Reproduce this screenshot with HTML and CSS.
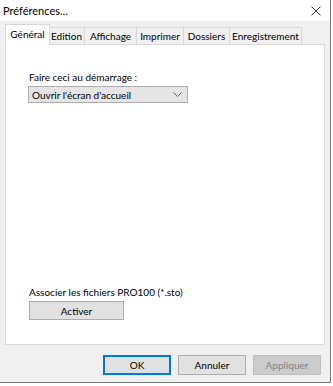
FILE: index.html
```html
<!DOCTYPE html>
<html lang="fr">
<head>
    <meta charset="UTF-8">
    <meta name="viewport" content="width=device-width, initial-scale=1.0">
    <title>Préférences...</title>
    <link rel="stylesheet" href="styles.css">
</head>
<body>
    <div class="window">
        <!-- barre de titre -->
        <div class="titlebar">
            <span class="title">Préférences...</span>
            <svg class="close" width="10" height="10" viewBox="0 0 10 10">
                <path d="M0.5 0.5 L9.5 9.5 M9.5 0.5 L0.5 9.5" stroke="#333" stroke-width="1" fill="none"/>
            </svg>
        </div>

        <div class="content">
            <!-- onglets -->
            <div class="tabs">
                <div class="tab active w-general">Général</div>
                <div class="tab w-edition">Edition</div>
                <div class="tab w-affichage">Affichage</div>
                <div class="tab w-imprimer">Imprimer</div>
                <div class="tab w-dossiers">Dossiers</div>
                <div class="tab w-enreg">Enregistrement</div>
            </div>

            <div class="panel">
                <div class="group">
                    <label class="label">Faire ceci au démarrage :</label>
                    <div class="combo">
                        <span>Ouvrir l'écran d'accueil</span>
                        <svg width="9" height="5" viewBox="0 0 9 5">
                            <path d="M0.5 0.5 L4.5 4.5 L8.5 0.5" stroke="#666" stroke-width="1" fill="none"/>
                        </svg>
                    </div>
                </div>

                <div class="group bottom">
                    <label class="label">Associer les fichiers PRO100 (*.sto)</label>
                    <button class="btn activer">Activer</button>
                </div>
            </div>

            <!-- boutons -->
            <div class="footer">
                <button class="btn default">OK</button>
                <button class="btn">Annuler</button>
                <button class="btn disabled">Appliquer</button>
            </div>
        </div>
    </div>
</body>
</html>
```

FILE: styles.css
```css
* {
    box-sizing: border-box;
}
body {
    margin: 0;
    font-family: "Lato", "Noto Sans", sans-serif;
    font-size: 10px;
    color: #000;
    background: #fff;
}
.window {
    width: 331px;
    height: 383px;
    border-right: 1px solid #7a7a7a;
    border-bottom: 1px solid #7a7a7a;
    background: #f0f0f0;
    display: flex;
    flex-direction: column;
}
/* barre de titre */
.titlebar {
    height: 21px;
    background: #fff;
    display: flex;
    align-items: center;
    justify-content: space-between;
    padding: 0 9px 0 3px;
}
.title {
    font-size: 11px;
}
.content {
    flex: 1;
    display: flex;
    flex-direction: column;
    padding: 3px 5px 0 5px;
}
/* onglets */
.tabs {
    display: flex;
    align-items: flex-end;
    height: 20px;
    padding-left: 1px;
    position: relative;
    z-index: 1;
}
.tab {
    height: 17px;
    line-height: 16px;
    text-align: center;
    background: #f0f0f0;
    border: 1px solid #d9d9d9;
    border-bottom: none;
    margin-left: -1px;
    white-space: nowrap;
}
.tab.active {
    height: 21px;
    line-height: 19px;
    background: #fff;
    position: relative;
    z-index: 2;
    margin-bottom: -1px;
    margin-right: -1px;
}
.w-general { width: 45px; }
.w-edition { width: 37px; }
.w-affichage { width: 53px; }
.w-imprimer { width: 48px; }
.w-dossiers { width: 47px; }
.w-enreg { width: 73px; }
.panel {
    height: 301px;
    background: #fff;
    border: 1px solid #d9d9d9;
    display: flex;
    flex-direction: column;
    padding: 0 0 0 22px;
}
.group {
    display: flex;
    flex-direction: column;
    align-items: flex-start;
    margin-top: 25px;
}
.group.bottom {
    margin-top: auto;
    margin-bottom: 24px;
}
.label {
    height: 15px;
    line-height: 15px;
    margin-bottom: 1px;
    margin-left: 1px;
}
.combo {
    width: 160px;
    height: 17px;
    border: 1px solid #adadad;
    background: #e5e5e5;
    display: flex;
    align-items: center;
    justify-content: space-between;
    padding: 0 5px 0 3px;
}
/* boutons */
.btn {
    font-family: inherit;
    font-size: 10px;
    height: 20px;
    padding: 0;
    background: #e1e1e1;
    border: 1px solid #adadad;
    color: #000;
}
.activer {
    width: 95px;
    height: 19px;
    margin-left: 1px;
}
.footer {
    display: flex;
    justify-content: flex-end;
    gap: 7px;
    padding: 10px 4px 0 0;
}
.footer .btn {
    width: 68px;
}
.btn.default {
    border: 1px solid #0078d7;
    box-shadow: inset 0 0 0 1px #0078d7;
}
.btn.disabled {
    background: #cccccc;
    border-color: #bfbfbf;
    color: #838383;
}
```
